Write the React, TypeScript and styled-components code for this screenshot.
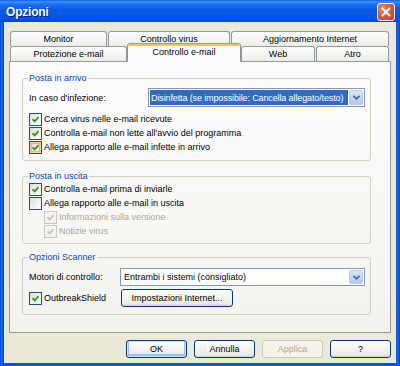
import React from 'react';
import styled, { createGlobalStyle, css } from 'styled-components';

const GlobalStyle = createGlobalStyle`
  html, body {
    margin: 0;
    padding: 0;
    background: #ece9d8;
  }
  body {
    font-family: 'Liberation Sans', Arial, sans-serif;
    font-size: 9px;
    color: #000;
  }
  * {
    box-sizing: border-box;
  }
`;

const Frame = styled.div`
  width: 400px;
  height: 366px;
  display: flex;
  flex-direction: column;
  overflow: hidden;
  background: linear-gradient(90deg, #0831d9 0, #166aee 1px, #0055ea 3px, #0055ea 396px, #166aee 398px, #0831d9 400px);
`;

const TitleBar = styled.div`
  flex: none;
  height: 22px;
  display: flex;
  align-items: center;
  justify-content: space-between;
  padding: 1px 5px 0 6px;
  background: linear-gradient(
    180deg,
    #0a5fe8 0%,
    #3d8ef6 8%,
    #1a6ff0 20%,
    #075ae7 45%,
    #0556e3 75%,
    #0450d9 92%,
    #0846c8 100%
  );
`;

const Title = styled.span`
  color: #fff;
  font-weight: bold;
  font-size: 12px;
  letter-spacing: -0.2px;
  text-shadow: 1px 1px 0 #0a1a8a;
`;

const CloseButton = styled.div`
  width: 18px;
  height: 18px;
  border: 1px solid #fff;
  border-radius: 3px;
  background: radial-gradient(circle at 30% 30%, #f08a6a 0%, #e05a34 45%, #c2401c 100%);
  display: flex;
  align-items: center;
  justify-content: center;
`;

const Client = styled.div`
  flex: 1;
  margin: 0 4px 3px 4px;
  background: #ece9d8;
  padding: 9px 5px 0 5px;
  display: flex;
  flex-direction: column;
`;

const TabStrip = styled.div`
  padding-left: 1px;
  display: flex;
  flex-direction: column;
`;

const TabRow = styled.div`
  display: flex;
  align-items: flex-end;
  height: 15px;
`;

const Tab = styled.div<{ $w: number; $ml?: number; $active?: boolean }>`
  flex: none;
  width: ${({ $w }) => $w}px;
  margin-left: ${({ $ml }) => $ml ?? 0}px;
  height: 15px;
  border: 1px solid #919b9c;
  border-bottom: none;
  border-radius: 3px 3px 0 0;
  background: linear-gradient(180deg, #ffffff 0%, #f5f5f2 55%, #ecebe6 100%);
  display: flex;
  justify-content: center;
  align-items: center;
  line-height: 13px;
  white-space: nowrap;
  ${({ $active }) =>
    $active &&
    css`
      position: relative;
      z-index: 2;
      height: 19px;
      margin-bottom: -1px;
      align-items: flex-start;
      padding-top: 2px;
      border-top: 1px solid #e68b2c;
      box-shadow: inset 0 2px 0 #ffc73c;
      background: #fcfcfe;
    `}
`;

const Panel = styled.div`
  width: 382px;
  height: 272px;
  border: 1px solid #919b9c;
  background: linear-gradient(180deg, #fcfcfe 0%, #f7f7f4 60%, #f4f3ee 100%);
  padding: 10px 19px 0 12px;
`;

const Group = styled.fieldset<{ $mt?: number; $pb: number }>`
  margin: ${({ $mt }) => $mt ?? 0}px 0 0 0;
  padding: 0 5px ${({ $pb }) => $pb}px 6px;
  min-width: 0;
  width: 349px;
  border: 1px solid #d0d0bf;
  border-radius: 3px;
`;

const Legend = styled.legend`
  color: #0046d5;
  line-height: 12px;
  padding: 0 1px;
  margin-left: -1px;
`;

const FieldRow = styled.div<{ $mt: number; $h: number }>`
  display: flex;
  align-items: center;
  margin-top: ${({ $mt }) => $mt}px;
  height: ${({ $h }) => $h}px;
`;

const FieldLabel = styled.span`
  flex: none;
  white-space: nowrap;
`;

const Combo = styled.div<{ $w: number; $h: number }>`
  margin-left: auto;
  width: ${({ $w }) => $w}px;
  height: ${({ $h }) => $h}px;
  border: 1px solid #7f9db9;
  background: #fff;
  display: flex;
  align-items: stretch;
  padding: 1px;
`;

const ComboValue = styled.div<{ $selected?: boolean }>`
  flex: 1;
  min-width: 0;
  display: flex;
  align-items: center;
  padding-left: 2px;
  white-space: nowrap;
  overflow: hidden;
  ${({ $selected }) =>
    $selected &&
    css`
      background: #316ac5;
      color: #fff;
      margin-right: 1px;
      padding-left: 1px;
      letter-spacing: -0.12px;
    `}
`;

const ComboArrow = styled.div`
  flex: none;
  width: 14px;
  border: 1px solid #bacbf5;
  border-radius: 2px;
  background: linear-gradient(180deg, #dce6fd 0%, #c4d5fb 50%, #b2c7f5 100%);
  display: flex;
  align-items: center;
  justify-content: center;
`;

const CheckList = styled.div<{ $mt: number }>`
  margin-top: ${({ $mt }) => $mt}px;
  display: flex;
  flex-direction: column;
`;

const CheckRow = styled.label<{ $indent?: number; $disabled?: boolean }>`
  display: flex;
  align-items: center;
  height: 14px;
  gap: 2px;
  padding-left: ${({ $indent }) => $indent ?? 0}px;
  flex: none;
  white-space: nowrap;
  color: ${({ $disabled }) => ($disabled ? '#aca899' : '#000')};
`;

const Box = styled.span<{ $disabled?: boolean; $hot?: boolean }>`
  flex: none;
  width: 13px;
  height: 13px;
  border: 1px solid ${({ $disabled }) => ($disabled ? '#cac8bb' : '#1c5180')};
  background: ${({ $disabled }) =>
    $disabled ? '#f4f3ee' : 'linear-gradient(135deg, #dcdcd7 0%, #f4f4f1 60%, #ffffff 100%)'};
  display: flex;
  align-items: center;
  justify-content: center;
  ${({ $hot }) =>
    $hot &&
    css`
      box-shadow: inset 0 0 0 1px #fcd389, inset 0 0 0 2px #f8b94a;
    `}
`;

const ScannerGrid = styled.div`
  margin-top: 5px;
  display: grid;
  grid-template-columns: 91px 1fr;
  grid-template-rows: 18px 18px;
  row-gap: 3px;
  align-items: center;
`;

const PushButton = styled.div<{ $w: number; $default?: boolean; $disabled?: boolean; $ml?: number }>`
  flex: none;
  width: ${({ $w }) => $w}px;
  height: 18px;
  margin-left: ${({ $ml }) => $ml ?? 0}px;
  border: 1px solid #003c74;
  border-radius: 3px;
  background: linear-gradient(180deg, #ffffff 0%, #f4f4f0 45%, #ecebe6 85%, #d6d0c5 100%);
  display: flex;
  align-items: center;
  justify-content: center;
  white-space: nowrap;
  ${({ $default }) =>
    $default &&
    css`
      box-shadow: inset 0 0 0 1px #cee7ff, inset 0 -1px 0 2px #a5bcf0;
    `}
  ${({ $disabled }) =>
    $disabled &&
    css`
      border-color: #c9c7ba;
      background: #f5f4ea;
      color: #aca899;
    `}
`;

const ButtonRow = styled.div`
  display: flex;
  justify-content: flex-end;
  gap: 7px;
  margin-top: 7px;
`;

const Tick = ({ disabled }: { disabled?: boolean }) => (
  <svg width="7" height="7" viewBox="0 0 7 7">
    <polyline
      points="0.5,3.2 2.6,5.3 6.5,1.2"
      fill="none"
      stroke={disabled ? '#cac8bb' : '#21a121'}
      strokeWidth="1.9"
    />
  </svg>
);

const Check = ({
  label,
  checked,
  disabled,
  hot,
  indent,
}: {
  label: string;
  checked?: boolean;
  disabled?: boolean;
  hot?: boolean;
  indent?: number;
}) => (
  <CheckRow $indent={indent} $disabled={disabled}>
    <Box $disabled={disabled} $hot={hot}>
      {checked && <Tick disabled={disabled} />}
    </Box>
    <span>{label}</span>
  </CheckRow>
);

const Arrow = () => (
  <svg width="7" height="5" viewBox="0 0 7 5">
    <polyline points="0.5,0.8 3.5,3.8 6.5,0.8" fill="none" stroke="#4d6185" strokeWidth="1.6" />
  </svg>
);

export default function App() {
  return (
    <>
      <GlobalStyle />
      <Frame>
        <TitleBar>
          <Title>Opzioni</Title>
          <CloseButton>
            <svg width="10" height="10" viewBox="0 0 10 10">
              <path d="M1 1 L9 9 M9 1 L1 9" stroke="#fff" strokeWidth="2" />
            </svg>
          </CloseButton>
        </TitleBar>
        <Client>
          <TabStrip>
            <TabRow>
              <Tab $w={97}>Monitor</Tab>
              <Tab $w={122} $ml={1}>Controllo virus</Tab>
              <Tab $w={158} $ml={1}>Aggiornamento Internet</Tab>
            </TabRow>
            <TabRow>
              <Tab $w={117}>Protezione e-mail</Tab>
              <Tab $w={114} $active>Controllo e-mail</Tab>
              <Tab $w={74}>Web</Tab>
              <Tab $w={73} $ml={1}>Atro</Tab>
            </TabRow>
          </TabStrip>
          <Panel>
            <Group $pb={6}>
              <Legend>Posta in arrivo</Legend>
              <FieldRow $mt={4} $h={19}>
                <FieldLabel>In caso d'infezione:</FieldLabel>
                <Combo $w={217} $h={19}>
                  <ComboValue $selected>Disinfetta (se impossibile: Cancella allegato/testo)</ComboValue>
                  <ComboArrow>
                    <Arrow />
                  </ComboArrow>
                </Combo>
              </FieldRow>
              <CheckList $mt={5}>
                <Check label="Cerca virus nelle e-mail ricevute" checked />
                <Check label="Controlla e-mail non lette all'avvio del programma" checked />
                <Check label="Allega rapporto alle e-mail infette in arrivo" checked hot />
              </CheckList>
            </Group>
            <Group $mt={9} $pb={5}>
              <Legend>Posta in uscita</Legend>
              <CheckList $mt={0}>
                <Check label="Controlla e-mail prima di inviarle" checked />
                <Check label="Allega rapporto alle e-mail in uscita" />
                <Check label="Informazioni sulla versione" checked disabled indent={15} />
                <Check label="Notizie virus" checked disabled indent={15} />
              </CheckList>
            </Group>
            <Group $mt={7} $pb={7}>
              <Legend>Opzioni Scanner</Legend>
              <ScannerGrid>
                <FieldLabel>Motori di controllo:</FieldLabel>
                <Combo $w={245} $h={18}>
                  <ComboValue>Entrambi i sistemi (consigliato)</ComboValue>
                  <ComboArrow>
                    <Arrow />
                  </ComboArrow>
                </Combo>
                <Check label="OutbreakShield" checked />
                <PushButton $w={112} $ml={1}>Impostazioni Internet...</PushButton>
              </ScannerGrid>
            </Group>
          </Panel>
          <ButtonRow>
            <PushButton $w={61} $default>OK</PushButton>
            <PushButton $w={61}>Annulla</PushButton>
            <PushButton $w={61} $disabled>Applica</PushButton>
            <PushButton $w={61}>?</PushButton>
          </ButtonRow>
        </Client>
      </Frame>
    </>
  );
}
